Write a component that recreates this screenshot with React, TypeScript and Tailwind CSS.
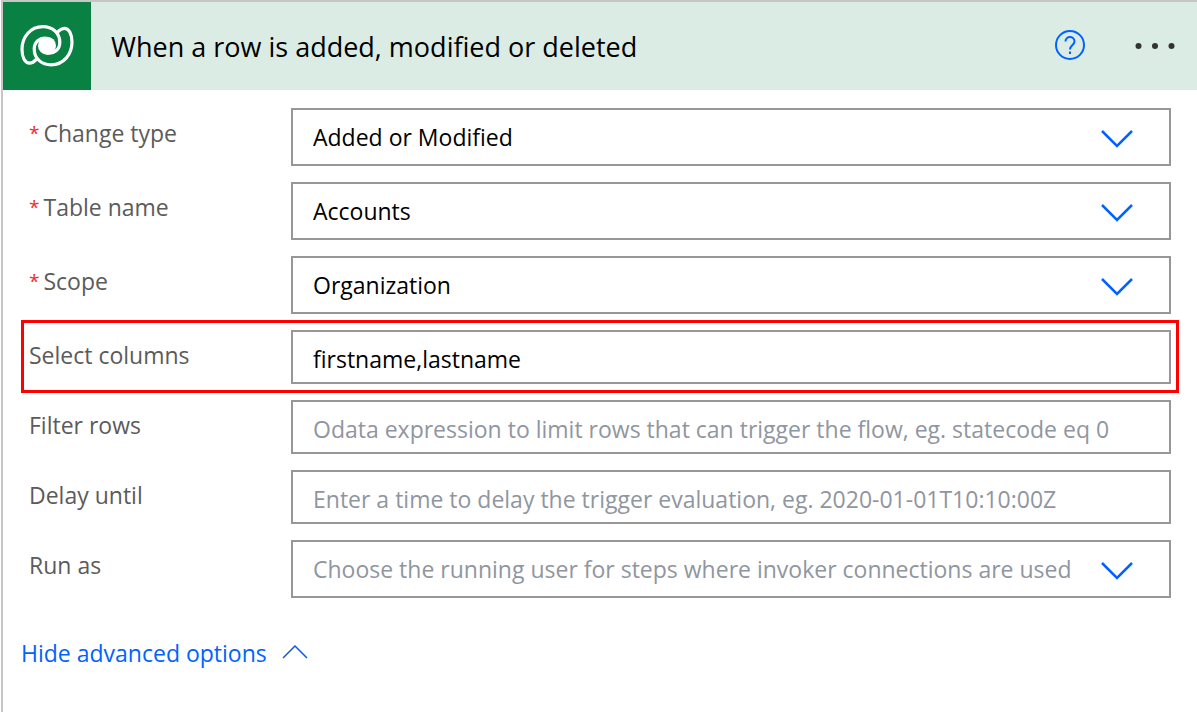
import { useState } from "react";
import type { ReactNode } from "react";

const LOGO_ARM = "M44 36.500C37 35 31.200 40 31.200 47C31.200 57 39 62.800 48 62.800C61 62.800 69 52 69 40C69 32 66 26.300 61.500 26.300C58.500 26.300 56.500 28 54.500 30.300";

function DataverseLogo() {
  return (
    <svg viewBox="0 0 88 88" className="size-22 shrink-0 bg-[#088142]" aria-hidden="true">
      <g fill="none" stroke="#fff" strokeWidth="3.2" strokeLinecap="round" strokeLinejoin="round">
        <path d={LOGO_ARM} />
        <path d={LOGO_ARM} transform="rotate(180 44 43.700)" />
      </g>
      <circle cx="44" cy="43.700" r="9" fill="#fff" />
    </svg>
  );
}

function ChevronDown() {
  return (
    <svg
      viewBox="0 0 34 20"
      className="pointer-events-none absolute right-9 top-5 h-5 w-9"
      fill="none"
      stroke="#0062ff"
      strokeWidth="2.5"
      aria-hidden="true"
    >
      <path d="M2 3L17 18L32 3" />
    </svg>
  );
}

type FieldProps = { id: string; label: string; required?: boolean; highlighted?: boolean; children: ReactNode };

function Field({ id, label, required, highlighted, children }: FieldProps) {
  return (
    <div className="relative flex">
      <label htmlFor={id} className="flex h-[50px] w-[262px] shrink-0 items-center text-[#5c5b5a]">
        {required && <span className="mr-1 text-[19px] text-[#f02c2c]">*</span>}
        {label}
      </label>
      <div className="relative min-w-0 flex-1">{children}</div>
      {highlighted && <div className="pointer-events-none absolute -inset-x-2 -top-2.5 -bottom-2.25 border-3 border-[#ff0000]" />}
    </div>
  );
}

type SelectProps = { id: string; label: string; required?: boolean; options: string[]; placeholder?: string };

function SelectField({ id, label, required, options, placeholder }: SelectProps) {
  const [value, setValue] = useState(placeholder ? "" : options[0]);
  return (
    <Field id={id} label={label} required={required}>
      <select
        id={id}
        value={value}
        required={required}
        onChange={(e) => setValue(e.target.value)}
        className={
          "block h-[58px] w-full appearance-none border-2 border-[#979797] bg-white pl-5 pr-20 " +
          (value ? "text-black" : "text-[#9096a0]")
        }
      >
        {placeholder && <option value="">{placeholder}</option>}
        {options.map((option) => (
          <option key={option}>{option}</option>
        ))}
      </select>
      <ChevronDown />
    </Field>
  );
}

type TextProps = { id: string; label: string; value?: string; placeholder?: string; highlighted?: boolean };

function TextField({ id, label, value, placeholder, highlighted }: TextProps) {
  return (
    <Field id={id} label={label} highlighted={highlighted}>
      <input
        id={id}
        type="text"
        defaultValue={value}
        placeholder={placeholder}
        className="block h-[54px] w-full border-2 border-[#979797] bg-white px-5 pt-1 text-black placeholder:text-[#9096a0]"
      />
    </Field>
  );
}

export default function App() {
  const [advanced, setAdvanced] = useState(true);
  return (
    <div className="min-h-screen bg-white pl-px font-['Open_Sans','Noto_Sans',sans-serif] text-[23px]">
      <main className="min-h-screen border-l-2 border-t-2 border-[#c8c6c4]">
        <header className="flex h-22 items-center bg-[#dbece4]">
          <DataverseLogo />
          <h1 className="ml-5 flex-1 pt-0.5 text-[27px] text-black">When a row is added, modified or deleted</h1>
          <button type="button" aria-label="Help" className="mr-12 pb-0.5">
            <svg viewBox="0 0 32 32" className="size-8" fill="none" stroke="#0062ff" strokeWidth="2" aria-hidden="true">
              <circle cx="17" cy="16" r="14" />
              <path d="M12.500 12.500C12.500 6.500 21.500 6.500 21.500 12.500C21.500 16 17 16 17 20.500" />
              <path d="M17 22.500V25" />
            </svg>
          </button>
          <button type="button" aria-label="More options" className="mr-5">
            <svg viewBox="0 0 44 12" className="h-3 w-11" fill="#333" aria-hidden="true">
              <circle cx="5.500" cy="6" r="3" />
              <circle cx="22" cy="6" r="3" />
              <circle cx="38.500" cy="6" r="3" />
            </svg>
          </button>
        </header>
        <form className="flex flex-col gap-4 pl-6.5 pr-6.5 pt-4.5">
          <SelectField id="change-type" label="Change type" required options={["Added or Modified", "Added", "Modified", "Deleted"]} />
          <SelectField id="table-name" label="Table name" required options={["Accounts", "Contacts"]} />
          <SelectField id="scope" label="Scope" required options={["Organization", "Business Unit", "User"]} />
          {advanced && (
            <>
              <TextField id="select-columns" label="Select columns" value="firstname,lastname" highlighted />
              <TextField
                id="filter-rows"
                label="Filter rows"
                placeholder="Odata expression to limit rows that can trigger the flow, eg. statecode eq 0"
              />
              <TextField
                id="delay-until"
                label="Delay until"
                placeholder="Enter a time to delay the trigger evaluation, eg. 2020-01-01T10:10:00Z"
              />
              <SelectField
                id="run-as"
                label="Run as"
                options={["Flow owner", "Modifying user", "Row owner"]}
                placeholder="Choose the running user for steps where invoker connections are used"
              />
            </>
          )}
        </form>
        <button
          type="button"
          onClick={() => setAdvanced(!advanced)}
          className="ml-4.5 mt-[38px] flex items-center gap-3.5 text-[#0062ff]"
        >
          {advanced ? "Hide" : "Show"} advanced options
          <svg viewBox="0 0 28 16" className={advanced ? "h-4 w-7" : "h-4 w-7 rotate-180"} fill="none" stroke="#0f5be0" strokeWidth="1.5" aria-hidden="true">
            <path d="M2 13L14 1L26 13" />
          </svg>
        </button>
      </main>
    </div>
  );
}
